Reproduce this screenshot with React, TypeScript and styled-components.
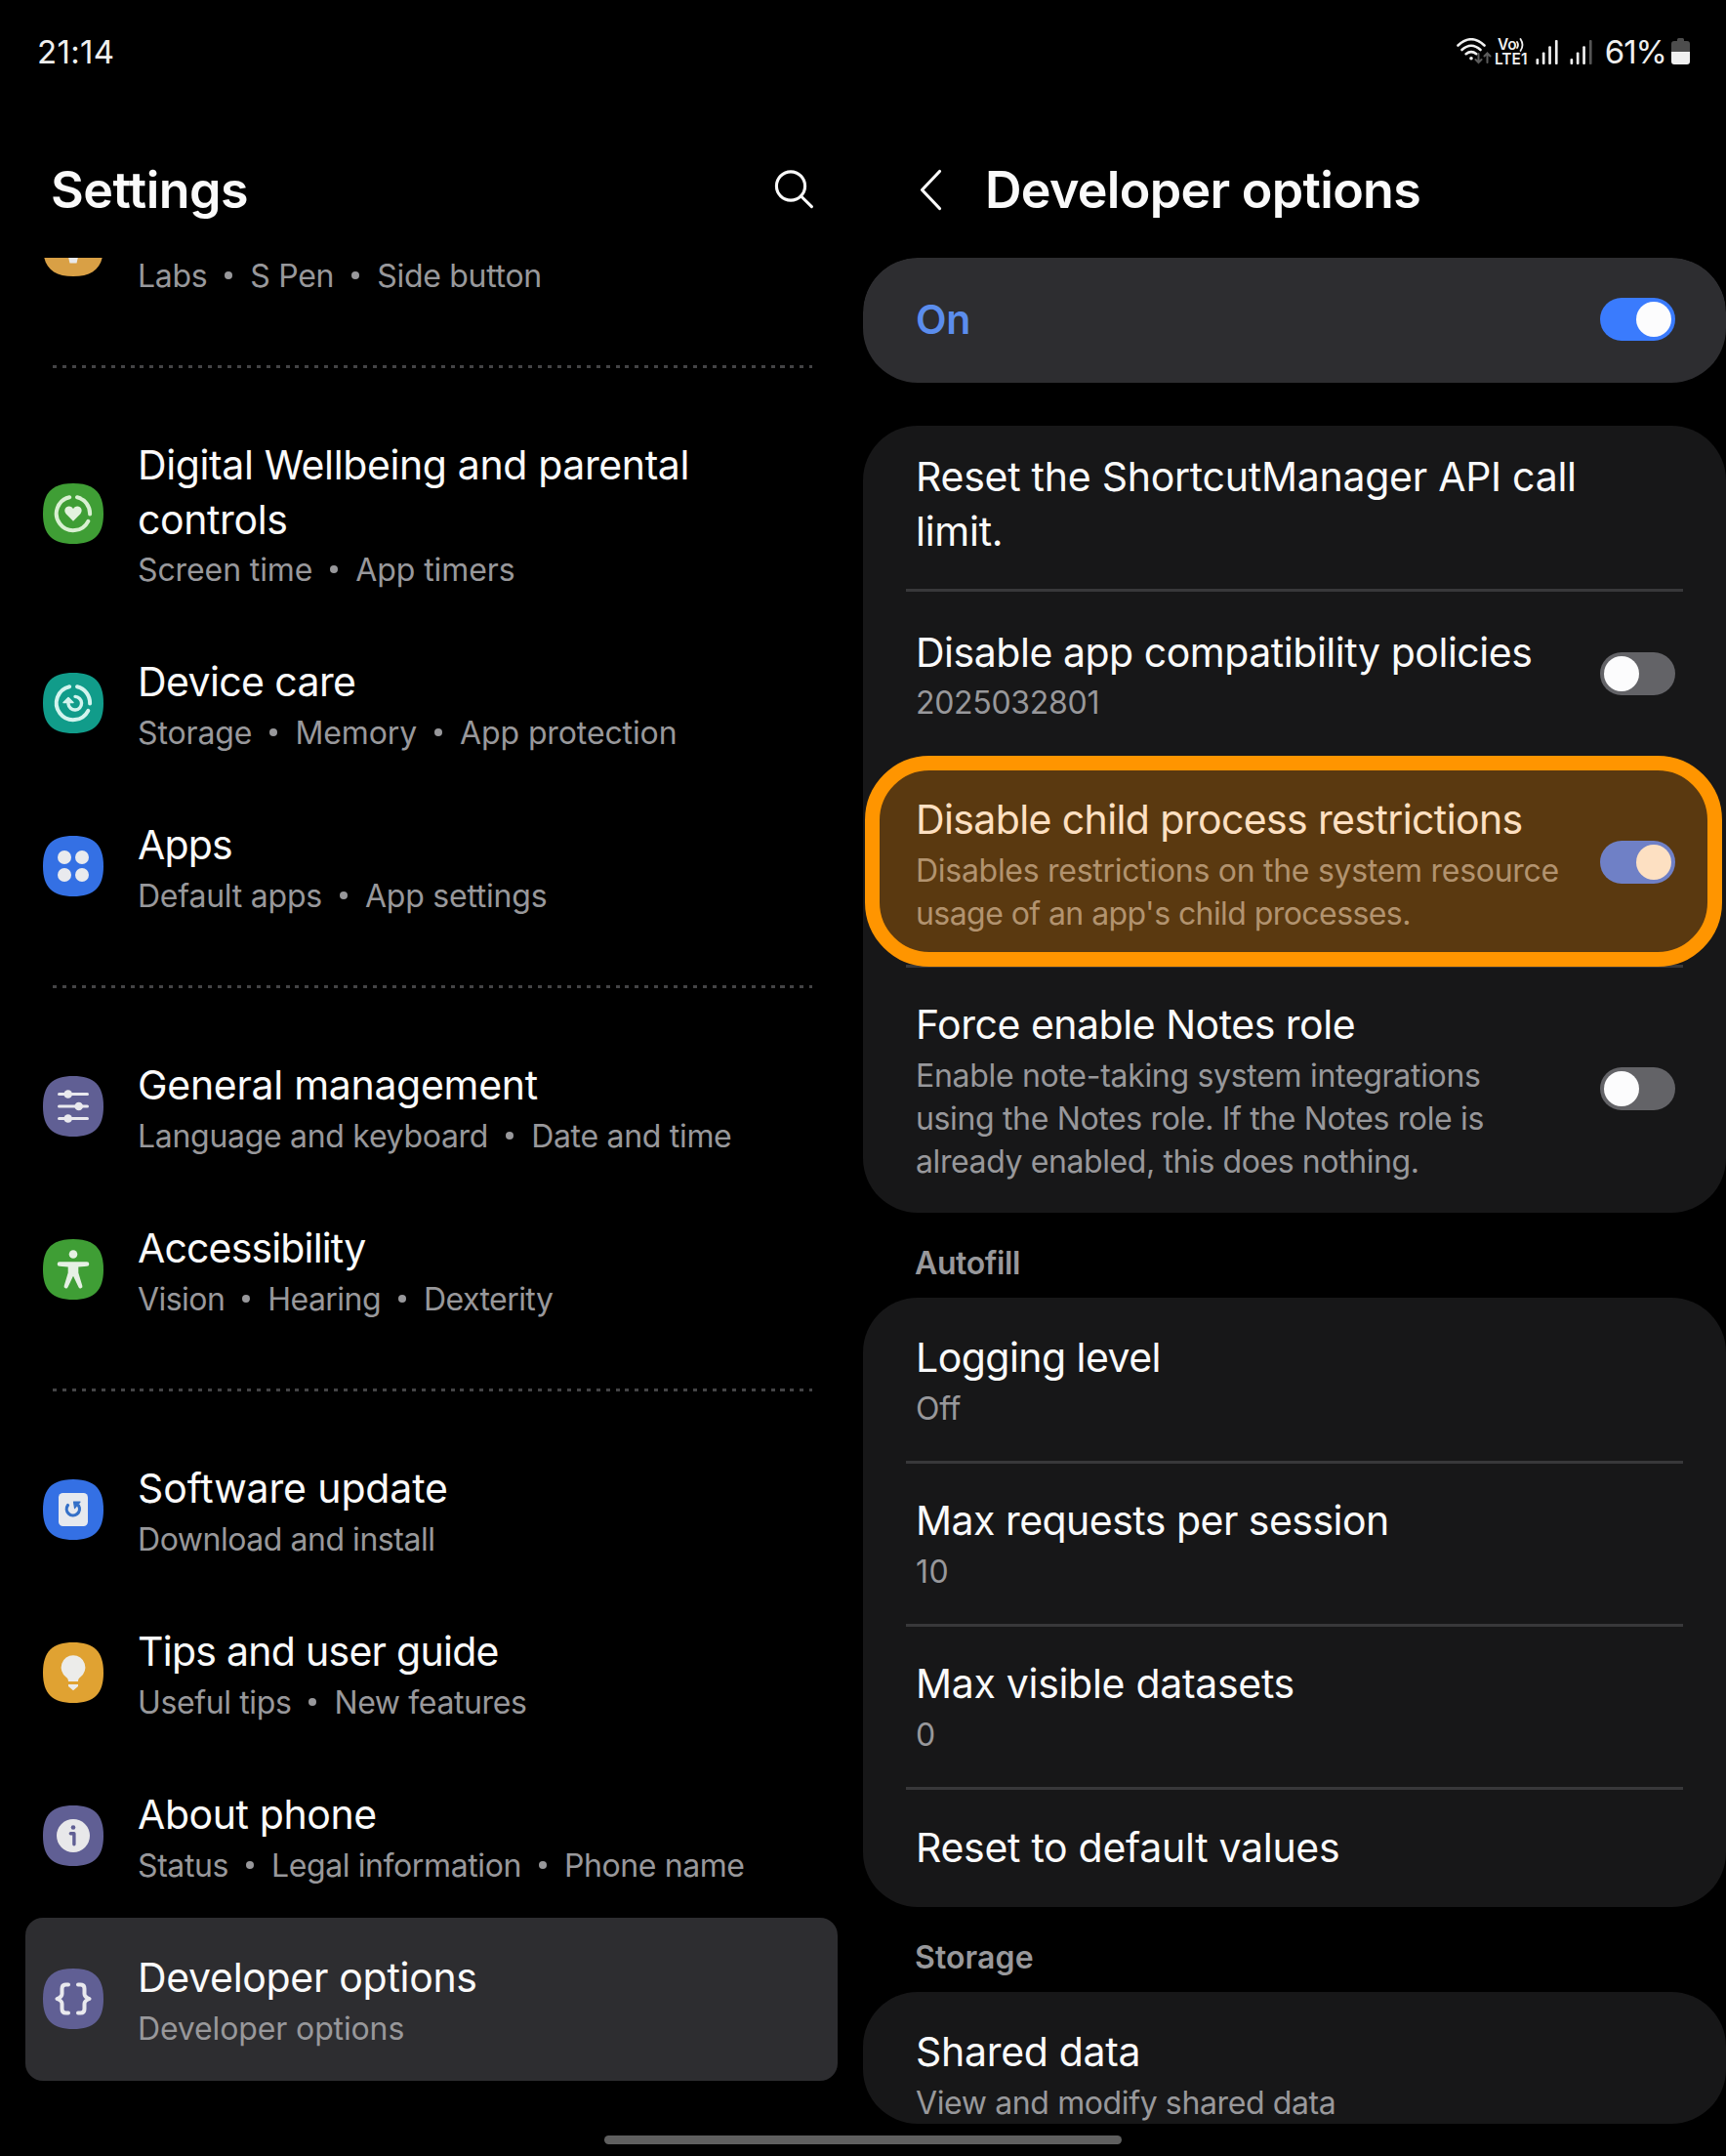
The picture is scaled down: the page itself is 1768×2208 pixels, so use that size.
import React from "react";
import styled, { createGlobalStyle } from "styled-components";

const Global = createGlobalStyle`
  *, *::before, *::after { box-sizing: border-box; }
  html, body { margin: 0; background: #000; }
`;

const Screen = styled.div`
  position: relative;
  width: 1768px;
  height: 2208px;
  overflow: hidden;
  display: flex;
  flex-direction: column;
  background: #000;
  color: #fafafa;
  font-family: Inter, "Liberation Sans", sans-serif;
`;

const StatusBar = styled.header`
  display: flex;
  align-items: center;
  justify-content: space-between;
  height: 106px;
  padding: 0 37px 0 38px;
  font-size: 33px;
  color: #efefef;
`;

const Clock = styled.span`
  letter-spacing: 0.3px;
`;

const StatusIcons = styled.div`
  display: flex;
  align-items: center;
`;

const Battery = styled.span`
  margin: 0 5px 0 12px;
  letter-spacing: -1px;
`;

const VoLte = styled.div`
  display: flex;
  flex-direction: column;
  align-items: center;
  margin: 0 8px 0 3px;
  width: 34px;
  font-size: 15.5px;
  line-height: 15px;
  font-weight: 600;
`;

const VoWave = styled.div`
  display: flex;
  align-items: center;
  letter-spacing: -0.3px;
`;

const Panes = styled.main`
  display: grid;
  grid-template-columns: 884px 884px;
  height: 2069px;
`;

const Pane = styled.section`
  display: flex;
  flex-direction: column;
  min-height: 0;
`;

const PaneHeader = styled.div<{ $detail?: boolean }>`
  display: flex;
  align-items: center;
  flex: none;
  height: 158px;
  padding: 19px 50px 0 ${(p) => (p.$detail ? 57 : 52)}px;
`;

const Heading = styled.h1<{ $track: number }>`
  margin: 0;
  flex: 1;
  font-size: 52px;
  line-height: 64px;
  font-weight: 600;
  white-space: nowrap;
  letter-spacing: ${(p) => p.$track}px;
`;

const BackButton = styled.span`
  display: flex;
  margin-right: 42px;
`;

const MenuViewport = styled.div`
  height: 1900px;
  overflow: hidden;
`;

const Menu = styled.nav`
  margin-top: -95px;
  padding: 0 26px;
`;

const MenuRow = styled.div<{ $active?: boolean; $tall?: boolean }>`
  display: flex;
  align-items: center;
  gap: 35px;
  height: ${(p) => (p.$tall ? 222 : 167)}px;
  padding-left: 18px;
  border-radius: 18px;
  background: ${(p) => (p.$active ? "#2d2d30" : "transparent")};

  > svg {
    margin-bottom: 1px;
  }
`;

const Separator = styled.div`
  height: 79px;
  margin: 0 26px 0 28px;
  padding-top: 38px;

  &::after {
    content: "";
    display: block;
    height: 3px;
    background: repeating-linear-gradient(90deg, #444446 0 4px, transparent 4px 9.94px);
  }
`;

const TextBlock = styled.div<{ $drop?: number }>`
  position: relative;
  z-index: 2;
  display: flex;
  flex-direction: column;
  gap: 2.5px;
  padding-top: ${(p) => p.$drop ?? 2}px;
  white-space: pre-line;
`;

const Title = styled.div<{ $track?: number; $accent?: boolean; $tinted?: boolean }>`
  min-height: 56px;
  font-size: 41px;
  line-height: 56px;
  font-weight: ${(p) => (p.$accent ? 600 : 400)};
  color: ${(p) => (p.$accent ? "#5b8ded" : p.$tinted ? "#fee0c2" : "#fafafa")};
  letter-spacing: ${(p) => p.$track ?? -0.3}px;
`;

const Summary = styled.div<{ $track?: number; $tinted?: boolean }>`
  font-size: 32px;
  line-height: 44px;
  color: ${(p) => (p.$tinted ? "#b2936f" : "#98989b")};
  letter-spacing: ${(p) => p.$track ?? -0.3}px;
`;

const SummaryLines = styled.div`
  display: flex;
  flex-direction: column;
`;

const Dot = styled.span`
  display: inline-block;
  width: 8px;
  height: 8px;
  margin: 0 18px;
  border-radius: 50%;
  background: currentColor;
  vertical-align: 8px;
`;

const SettingsPane = styled.div`
  display: flex;
  flex-direction: column;
  height: 1911px;
  overflow: hidden;
  border-radius: 56px;
`;

const Card = styled.div<{ $raised?: boolean; $gapTop?: number }>`
  flex: none;
  margin-top: ${(p) => p.$gapTop ?? 0}px;
  border-radius: 56px;
  background: ${(p) => (p.$raised ? "#2d2d30" : "#171718")};
`;

const PrefRow = styled.div<{ $height: number; $divided?: boolean; $lift?: number }>`
  position: relative;
  display: flex;
  align-items: center;
  justify-content: space-between;
  height: ${(p) => p.$height}px;
  padding: 0 52px ${(p) => p.$lift ?? 0}px 54px;

  &::after {
    content: "";
    display: ${(p) => (p.$divided ? "block" : "none")};
    position: absolute;
    left: 44px;
    right: 44px;
    bottom: -3px;
    height: 3px;
    background: #38383a;
  }
`;

const Highlight = styled.div`
  position: absolute;
  z-index: 1;
  inset: -3px 4px -2px 2px;
  border: 15px solid #ff9500;
  border-radius: 66px;
  background: #5a3910;
`;

const CategoryLabel = styled.h2<{ $track: number }>`
  flex: none;
  height: 87px;
  margin: 0;
  padding: 31px 0 0 53px;
  font-size: 32px;
  line-height: 42px;
  font-weight: 600;
  color: #98989b;
  letter-spacing: ${(p) => p.$track}px;
`;

const Track = styled.span<{ $on?: boolean; $tinted?: boolean }>`
  position: relative;
  z-index: 2;
  display: flex;
  flex: none;
  justify-content: ${(p) => (p.$on ? "flex-end" : "flex-start")};
  width: 77px;
  height: 44px;
  padding: 4px;
  border-radius: 22px;
  background: ${(p) => (p.$tinted ? "#6f80c6" : p.$on ? "#3a7bfd" : "#636367")};
`;

const Thumb = styled.span<{ $tinted?: boolean }>`
  width: 36px;
  height: 36px;
  border-radius: 50%;
  background: ${(p) => (p.$tinted ? "#fde0c2" : "#fcfcfd")};
`;

const HomeBar = styled.div`
  align-self: center;
  width: 530px;
  height: 9px;
  margin-top: 12px;
  border-radius: 5px;
  background: #5f5f5f;
`;

const Switch = ({ on, tinted }: { on?: boolean; tinted?: boolean }) => (
  <Track $on={on} $tinted={tinted}>
    <Thumb $tinted={tinted} />
  </Track>
);

type IconName =
  | "features"
  | "wellbeing"
  | "care"
  | "apps"
  | "general"
  | "access"
  | "update"
  | "tips"
  | "about"
  | "developer";

const tileColors: Record<IconName, string> = {
  features: "#d9a045",
  wellbeing: "#3f9e35",
  care: "#119c8a",
  apps: "#3470e4",
  general: "#605f94",
  access: "#3f9e35",
  update: "#3470e4",
  tips: "#e0a232",
  about: "#605f94",
  developer: "#605f94",
};

const line = {
  fill: "none",
  stroke: "#e9e9ee",
  strokeWidth: 4,
  strokeLinecap: "round" as const,
  strokeLinejoin: "round" as const,
};

const ring = (color: string) => (
  <g {...line} stroke={color}>
    <path d="M27.200 14.200A17.200 17.200 0 1 0 46.300 38.800" />
    <path d="M35 14.300A17.200 17.200 0 0 1 48.100 31.500" />
  </g>
);

const glyphs: Record<IconName, React.ReactNode> = {
  features: <path d="M25 38h12l-2.500 10.500h-7z" fill="#e9e9ea" />,
  wellbeing: (
    <>
      {ring("#d9f0d2")}
      <path
        d="M31 38.800L23.600 31.200C20.800 28 23 23.600 26.700 23.600c2 0 3.400 1 4.300 2.600c.9-1.600 2.300-2.600 4.300-2.600c3.700 0 5.900 4.400 3.100 7.600z"
        fill="#e3f3df"
      />
    </>
  ),
  care: (
    <>
      {ring("#d3f4ee")}
      <path d="M33 24.400A6.800 6.800 0 1 1 26 32V28" {...line} stroke="#d3f4ee" strokeWidth={3.400} />
      <path d="M26 25.500l-5 5h10z" {...line} stroke="#d3f4ee" strokeWidth={1.500} fill="#d3f4ee" />
    </>
  ),
  apps: (
    <g fill="#e9eaee">
      <circle cx="22" cy="22" r="7" />
      <circle cx="40" cy="22" r="7" />
      <circle cx="22" cy="40" r="7" />
      <circle cx="40" cy="40" r="7" />
    </g>
  ),
  general: (
    <>
      <path d="M16.500 18.500h29M16.500 31h29M16.500 43.500h29" {...line} strokeWidth={3} />
      <g fill="#e9e9ee">
        <circle cx="25.700" cy="18.500" r="4.300" />
        <circle cx="36.700" cy="31" r="4.300" />
        <circle cx="25.700" cy="43.500" r="4.300" />
      </g>
    </>
  ),
  access: (
    <>
      <circle cx="31" cy="15.500" r="4.300" fill="#e6f0e4" />
      <path
        d="M17 23.200H45a2.300 2.300 0 0 1 0 4.600L36.300 28.500V34.500L40.300 47.700a2 2 0 0 1-3.800 1.500L31 37.800L25.500 49.200a2 2 0 0 1-3.800-1.500L25.700 34.500V28.500L17 27.800a2.300 2.300 0 0 1 0-4.600z"
        fill="#e6f0e4"
      />
    </>
  ),
  update: (
    <>
      <rect x="16" y="14" width="30" height="34" rx="4.500" fill="#e6e9ee" />
      <path d="M25.500 26.500A6.600 6.600 0 1 0 36.500 27" {...line} stroke="#3470c8" strokeWidth={3.200} />
      <path d="M31.500 23H38l-5.500 6.500z" {...line} stroke="#3470c8" strokeWidth={1.200} fill="#3470c8" />
    </>
  ),
  tips: (
    <g fill="#ececea">
      <path d="M31 13.200a12.400 12.400 0 0 0-7.400 22.300c1.800 1.400 2.400 2.500 2.400 4.500h10c0-2 .6-3.100 2.400-4.500A12.400 12.400 0 0 0 31 13.200z" />
      <path d="M26 43h10v2l-5 4.200l-5-4.200z" />
    </g>
  ),
  about: (
    <>
      <circle cx="31" cy="31" r="17" fill="#e8e8ea" />
      <circle cx="31" cy="22.500" r="2.300" fill="#605f94" />
      <path d="M28.300 28.700h3.600v11" {...line} stroke="#605f94" strokeWidth={3.400} />
    </>
  ),
  developer: (
    <path
      d="M26 16.500h-2.500q-4 0-4 4V26q0 3-5 5q5 2 5 5v5.500q0 4 4 4H26M36 16.500h2.500q4 0 4 4V26q0 3 5 5q-5 2-5 5v5.500q0 4-4 4H36"
      {...line}
      strokeWidth={4}
    />
  ),
};

const Tile = ({ name }: { name: IconName }) => (
  <svg width="62" height="62" viewBox="0 0 62 62">
    <path d="M31 0C52 0 62 9 62 31S52 62 31 62S0 53 0 31S10 0 31 0z" fill={tileColors[name]} />
    {glyphs[name]}
  </svg>
);

interface Entry {
  icon: IconName;
  title: string;
  items: string[];
  track?: number;
  sub?: number;
  active?: boolean;
  tall?: boolean;
}

const groups: Entry[][] = [
  [{ icon: "features", title: "", items: ["Labs", "S Pen", "Side button"] }],
  [
    {
      icon: "wellbeing",
      title: "Digital Wellbeing and parental\ncontrols",
      items: ["Screen time", "App timers"],
      track: -0.38,
      sub: -0.1,
      tall: true,
    },
    {
      icon: "care",
      title: "Device care",
      items: ["Storage", "Memory", "App protection"],
      track: -0.6,
      sub: -0.11,
    },
    { icon: "apps", title: "Apps", items: ["Default apps", "App settings"], track: -0.85, sub: -0.23 },
  ],
  [
    { icon: "general", title: "General management", items: ["Language and keyboard", "Date and time"] },
    {
      icon: "access",
      title: "Accessibility",
      items: ["Vision", "Hearing", "Dexterity"],
      track: -0.85,
      sub: -0.55,
    },
  ],
  [
    { icon: "update", title: "Software update", items: ["Download and install"], track: -0.13, sub: -0.46 },
    {
      icon: "tips",
      title: "Tips and user guide",
      items: ["Useful tips", "New features"],
      track: -0.73,
      sub: -0.38,
    },
    {
      icon: "about",
      title: "About phone",
      items: ["Status", "Legal information", "Phone name"],
      track: -0.4,
      sub: -0.4,
    },
    {
      icon: "developer",
      title: "Developer options",
      items: ["Developer options"],
      sub: -0.13,
      active: true,
    },
  ],
];

const WifiIcon = () => (
  <svg
    width="36"
    height="28"
    viewBox="0 0 36 28"
    fill="none"
    stroke="#f0f0f0"
    strokeWidth="2.600"
    strokeLinecap="round"
  >
    <path d="M1.500 7.500Q15 -5 28.500 7.500M5.500 12Q15 3.500 24.500 12M9.700 16.200Q15 12 20.300 16.200" />
    <circle cx="15" cy="20.800" r="1.800" fill="#f0f0f0" stroke="none" />
    <path d="M22.500 16v9m-3-3l3 3l3-3M31.500 25v-9.500m-3 3l3-3l3 3" stroke="#5c5c5c" strokeWidth="2" />
  </svg>
);

const WaveIcon = () => (
  <svg width="8" height="14" viewBox="0 0 8 14" fill="none" stroke="#f0f0f0" strokeWidth="1.800" strokeLinecap="round">
    <path d="M1 4Q3 7 1 10M4.500 1Q8.500 7 4.500 13" />
  </svg>
);

const SignalIcon = ({ weak }: { weak?: boolean }) => (
  <svg width="24" height="27" viewBox="0 0 24 27" fill="#f0f0f0">
    <rect x="0.500" y="20" width="2.700" height="6" rx="1" />
    <rect x="6.800" y="13.500" width="2.700" height="12.500" rx="1" />
    <rect x="13.200" y="7.300" width="2.700" height="18.700" rx="1" />
    <rect x="19.900" y="1" width="2.700" height="25" rx="1" fill={weak ? "#555" : "#f0f0f0"} />
  </svg>
);

const Signals = styled.div`
  display: flex;
  gap: 11px;
`;

const BatteryIcon = () => (
  <svg width="19" height="28" viewBox="0 0 19 28">
    <path
      d="M6 1.500a1.500 1.500 0 0 1 1.500-1.500h4a1.500 1.500 0 0 1 1.500 1.500V3h3a3 3 0 0 1 3 3v8H0V6a3 3 0 0 1 3-3h3z"
      fill="#4d4d4d"
    />
    <path d="M0 14h19v10a3 3 0 0 1-3 3H3a3 3 0 0 1-3-3z" fill="#f0f0f0" />
  </svg>
);

const SearchIcon = () => (
  <svg
    width="42"
    height="42"
    viewBox="0 0 42 42"
    fill="none"
    stroke="#fafafa"
    strokeWidth="3.100"
    strokeLinecap="round"
  >
    <circle cx="18" cy="16.500" r="14.600" />
    <path d="M28.600 27L39.400 37.600" />
  </svg>
);

const BackIcon = () => (
  <svg
    width="26"
    height="44"
    viewBox="0 0 26 44"
    fill="none"
    stroke="#fafafa"
    strokeWidth="3.200"
    strokeLinecap="round"
    strokeLinejoin="round"
  >
    <path d="M21.500 2.500L3.500 21.500L21.500 40.500" />
  </svg>
);

const MenuItem = ({ entry }: { entry: Entry }) => (
  <MenuRow $active={entry.active} $tall={entry.tall}>
    <Tile name={entry.icon} />
    <TextBlock>
      <Title $track={entry.track}>{entry.title}</Title>
      <Summary $track={entry.sub}>
        {entry.items.map((item, i) => (
          <React.Fragment key={item}>
            {i > 0 && <Dot />}
            {item}
          </React.Fragment>
        ))}
      </Summary>
    </TextBlock>
  </MenuRow>
);

interface PrefProps {
  title: string;
  summary?: string[];
  height?: number;
  divided?: boolean;
  toggle?: "on" | "off";
  highlighted?: boolean;
  track?: number;
  sub?: number[];
  drop?: number;
  lift?: number;
}

const Preference = ({
  title,
  summary,
  height = 167,
  divided,
  toggle,
  highlighted,
  track,
  sub,
  drop,
  lift,
}: PrefProps) => (
  <PrefRow $height={height} $divided={divided} $lift={lift}>
    <TextBlock $drop={drop}>
      <Title $track={track} $tinted={highlighted}>
        {title}
      </Title>
      {summary && (
        <SummaryLines>
          {summary.map((text, i) => (
            <Summary key={text} $track={sub?.[i]} $tinted={highlighted}>
              {text}
            </Summary>
          ))}
        </SummaryLines>
      )}
    </TextBlock>
    {toggle && <Switch on={toggle === "on"} tinted={highlighted} />}
    {highlighted && <Highlight />}
  </PrefRow>
);

export default function App() {
  return (
    <Screen>
      <Global />
      <StatusBar>
        <Clock>21:14</Clock>
        <StatusIcons>
          <WifiIcon />
          <VoLte>
            <VoWave>
              Vo
              <WaveIcon />
            </VoWave>
            <span>LTE1</span>
          </VoLte>
          <Signals>
            <SignalIcon />
            <SignalIcon weak />
          </Signals>
          <Battery>61%</Battery>
          <BatteryIcon />
        </StatusIcons>
      </StatusBar>
      <Panes>
        <Pane>
          <PaneHeader>
            <Heading $track={-0.5}>Settings</Heading>
            <SearchIcon />
          </PaneHeader>
          <MenuViewport>
            <Menu>
              {groups.map((group, i) => (
                <React.Fragment key={group[0].icon}>
                  {i > 0 && <Separator />}
                  {group.map((entry) => (
                    <MenuItem key={entry.icon} entry={entry} />
                  ))}
                </React.Fragment>
              ))}
            </Menu>
          </MenuViewport>
        </Pane>
        <Pane>
          <PaneHeader $detail>
            <BackButton>
              <BackIcon />
            </BackButton>
            <Heading $track={-0.7}>Developer options</Heading>
          </PaneHeader>
          <SettingsPane>
            <Card $raised>
              <PrefRow $height={128} $lift={2}>
                <Title $accent>On</Title>
                <Switch on />
              </PrefRow>
            </Card>
            <Card $gapTop={44}>
              <Preference
                title={"Reset the ShortcutManager API call\nlimit."}
                height={167}
                track={-0.26}
                drop={0}
                lift={7}
                divided
              />
              <Preference
                title="Disable app compatibility policies"
                summary={["2025032801"]}
                height={174}
                track={-0.47}
                toggle="off"
              />
              <Preference
                title="Disable child process restrictions"
                summary={["Disables restrictions on the system resource", "usage of an app's child processes."]}
                height={211}
                track={-0.61}
                sub={[-0.28, -0.57]}
                drop={4}
                toggle="on"
                highlighted
                divided
              />
              <Preference
                title="Force enable Notes role"
                summary={[
                  "Enable note-taking system integrations",
                  "using the Notes role. If the Notes role is",
                  "already enabled, this does nothing.",
                ]}
                height={254}
                track={-0.48}
                sub={[-0.3, -0.35, -0.4]}
                drop={4}
                lift={1}
                toggle="off"
              />
            </Card>
            <CategoryLabel $track={-0.4}>Autofill</CategoryLabel>
            <Card>
              <Preference title="Logging level" summary={["Off"]} track={-0.54} divided />
              <Preference title="Max requests per session" summary={["10"]} track={-0.52} sub={[0.5]} divided />
              <Preference title="Max visible datasets" summary={["0"]} divided />
              <Preference title="Reset to default values" height={123} drop={0} />
            </Card>
            <CategoryLabel $track={0.1}>Storage</CategoryLabel>
            <Card>
              <Preference title="Shared data" summary={["View and modify shared data"]} sub={[-0.38]} />
            </Card>
          </SettingsPane>
        </Pane>
      </Panes>
      <HomeBar />
    </Screen>
  );
}
